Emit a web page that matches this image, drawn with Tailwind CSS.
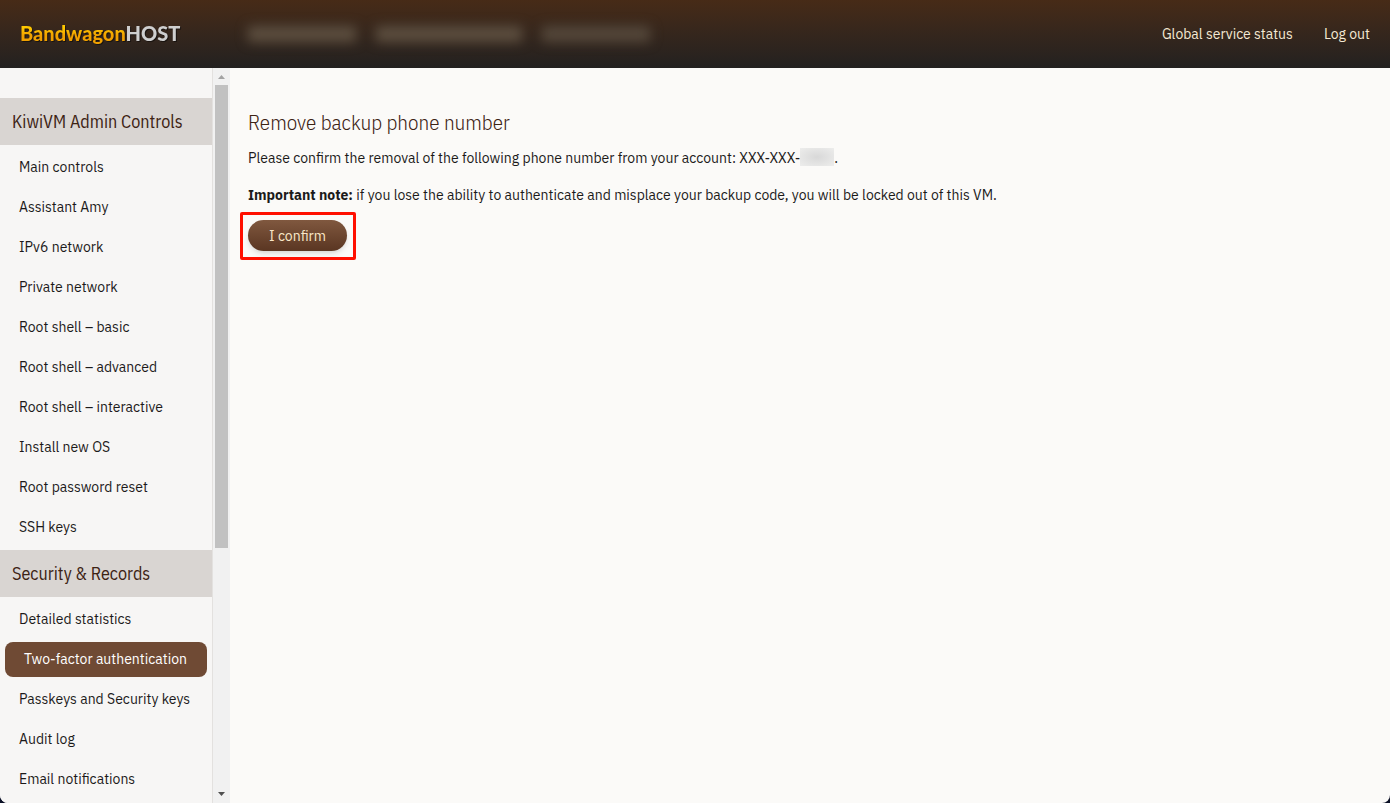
<!DOCTYPE html>
<html lang="en">
<head>
  <meta charset="UTF-8" />
  <meta name="viewport" content="width=device-width, initial-scale=1.0"/>
  <title>KiwiVM - Remove backup phone number</title>
  <script src="https://cdn.jsdelivr.net/npm/@tailwindcss/browser@4"></script>
</head>
<body class="bg-[#0b1026] font-['IBM_Plex_Sans','Noto_Sans',sans-serif] text-sm text-[#1c1a1a]">

<div class="flex h-screen flex-col overflow-hidden rounded-b-lg bg-[#fbfaf8]">

  <!-- Top bar -->
  <header class="flex h-[68px] shrink-0 items-center bg-linear-to-b from-[#472b17] to-[#232120] px-5 text-[#f5e9d3]">
    <a href="#" class="w-[228px] pb-[2px] font-['Lato',sans-serif] text-xl font-black drop-shadow-[1px_1px_0_#1a1410]">
      <span class="bg-linear-to-b from-[#ffc800] from-30% to-[#f0a000] to-60% bg-clip-text text-transparent">Bandwagon</span><span class="text-[#cfcfcf]">HOST</span>
    </a>
    <!-- Server name, hidden -->
    <div class="flex gap-5 blur-[6px]">
      <span class="h-4 w-[108px] bg-[#5c4e3f]"></span>
      <span class="h-4 w-[146px] bg-[#5c4e3f]"></span>
      <span class="h-4 w-[108px] bg-[#54473a]"></span>
    </div>
    <nav class="ml-auto flex gap-[31px]">
      <a href="#">Global service status</a>
      <a href="#">Log out</a>
    </nav>
  </header>

  <div class="flex min-h-0 flex-1">

    <!-- Sidebar -->
    <aside class="flex w-[230px] shrink-0 bg-[#f7f6f5]">
      <nav class="flex-1 overflow-hidden border-r border-[#e3e1df] pt-[30px]">
        <h2 class="flex h-[47px] items-center bg-[#d9d5d2] pl-3 font-['IBM_Plex_Sans_Condensed','Roboto_Condensed','IBM_Plex_Sans',sans-serif] text-lg text-[#3d2314]">KiwiVM Admin Controls</h2>
        <ul class="pt-[2px] pb-[3px]">
          <li><a href="#" class="flex h-10 items-center pl-[19px]">Main controls</a></li>
          <li><a href="#" class="flex h-10 items-center pl-[19px]">Assistant Amy</a></li>
          <li><a href="#" class="flex h-10 items-center pl-[19px]">IPv6 network</a></li>
          <li><a href="#" class="flex h-10 items-center pl-[19px]">Private network</a></li>
          <li><a href="#" class="flex h-10 items-center pl-[19px]">Root shell – basic</a></li>
          <li><a href="#" class="flex h-10 items-center pl-[19px]">Root shell – advanced</a></li>
          <li><a href="#" class="flex h-10 items-center pl-[19px]">Root shell – interactive</a></li>
          <li><a href="#" class="flex h-10 items-center pl-[19px]">Install new OS</a></li>
          <li><a href="#" class="flex h-10 items-center pl-[19px]">Root password reset</a></li>
          <li><a href="#" class="flex h-10 items-center pl-[19px]">SSH keys</a></li>
        </ul>
        <h2 class="flex h-[47px] items-center bg-[#d9d5d2] pl-3 font-['IBM_Plex_Sans_Condensed','Roboto_Condensed','IBM_Plex_Sans',sans-serif] text-lg text-[#3d2314]">Security &amp; Records</h2>
        <ul class="pt-[2px] pb-[3px]">
          <li><a href="#" class="flex h-10 items-center pl-[19px]">Detailed statistics</a></li>
          <li class="flex h-10 items-center px-[5px]"><a href="#" class="flex h-[35px] flex-1 items-center rounded-lg bg-[#6f4a34] pl-[19px] text-white">Two-factor authentication</a></li>
          <li><a href="#" class="flex h-10 items-center pl-[19px]">Passkeys and Security keys</a></li>
          <li><a href="#" class="flex h-10 items-center pl-[19px]">Audit log</a></li>
          <li><a href="#" class="flex h-10 items-center pl-[19px]">Email notifications</a></li>
        </ul>
      </nav>
      <!-- Scrollbar -->
      <div class="flex w-[17px] flex-col items-center bg-[#f1f1f1]">
        <svg class="h-[17px] w-[17px] shrink-0" viewBox="0 0 17 17"><path d="M5 11h7L8.500 7z" fill="#a3a3a3"/></svg>
        <div class="h-[63%] w-[13px] bg-[#c1c1c1]"></div>
        <svg class="mt-auto h-[17px] w-[17px] shrink-0" viewBox="0 0 17 17"><path d="M5 6h7L8.500 10z" fill="#505050"/></svg>
      </div>
    </aside>

    <!-- Content -->
    <main class="flex-1 px-[18px] pt-10">
      <h1 class="font-['IBM_Plex_Sans_Condensed','Roboto_Condensed','IBM_Plex_Sans',sans-serif] text-[21px] leading-7 font-light text-[#3d2314]">Remove backup phone number</h1>
      <p class="mt-3">Please confirm the removal of the following phone number from your account: XXX-XXX-<span class="inline-block h-[18px] w-[34px] bg-[radial-gradient(#d8d8d8,#ededec)] align-[-3px]"></span>.</p>
      <p class="mt-[17px]"><b>Important note:</b> if you lose the ability to authenticate and misplace your backup code, you will be locked out of this VM.</p>
      <div class="relative mt-[15px] w-fit">
        <button type="button" class="block h-[31px] rounded-full bg-linear-to-b from-[#80583f] to-[#5a3622] px-[21px] text-[#f9e7c8] shadow-md">I confirm</button>
        <div class="pointer-events-none absolute -top-2 -right-[9px] -bottom-[9px] -left-2 rounded-xs border-3 border-[#ff0f00]"></div>
      </div>
    </main>
  </div>
</div>

</body>
</html>
